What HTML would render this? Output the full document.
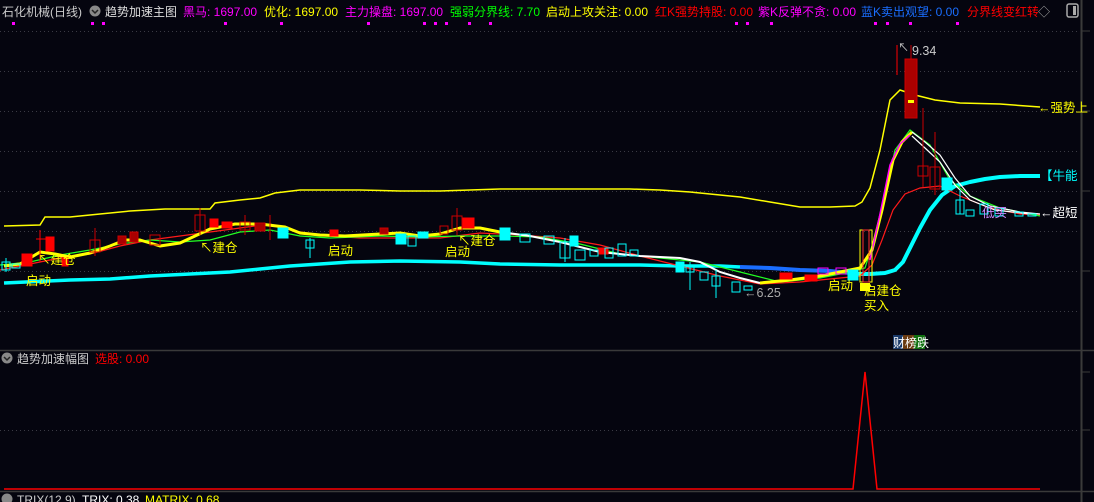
<!DOCTYPE html>
<html><head><meta charset="utf-8"><style>
html,body{margin:0;padding:0;background:#05050f;width:1094px;height:502px;overflow:hidden}
svg{display:block}
text{font-family:"Liberation Sans","Noto Sans CJK SC",sans-serif}
</style></head><body>
<svg width="1094" height="502" viewBox="0 0 1094 502" xmlns="http://www.w3.org/2000/svg">
<defs><clipPath id="hc"><rect x="0" y="0" width="1038" height="30"/></clipPath></defs>
<rect width="1094" height="502" fill="#05050f"/>
<g stroke="#3a3a44" stroke-dasharray="1 3" stroke-width="1">
<line x1="0" y1="31.5" x2="1080" y2="31.5"/><line x1="0" y1="71.5" x2="1080" y2="71.5"/>
<line x1="0" y1="111.5" x2="1080" y2="111.5"/><line x1="0" y1="151.5" x2="1080" y2="151.5"/>
<line x1="0" y1="191.5" x2="1080" y2="191.5"/><line x1="0" y1="231.5" x2="1080" y2="231.5"/>
<line x1="0" y1="271.5" x2="1080" y2="271.5"/><line x1="0" y1="311.5" x2="1080" y2="311.5"/>
<line x1="0" y1="430.5" x2="1080" y2="430.5"/>
</g>
<line x1="1081.5" y1="0" x2="1081.5" y2="502" stroke="#3a3a3a" stroke-width="2"/>
<line x1="0" y1="350.5" x2="1094" y2="350.5" stroke="#3a3a3a" stroke-width="1.5"/>
<line x1="0" y1="491.5" x2="1094" y2="491.5" stroke="#3a3a3a" stroke-width="1.5"/>
<g stroke="#3a3a3a"><line x1="1082" y1="372" x2="1090" y2="372"/><line x1="1082" y1="430" x2="1090" y2="430"/><line x1="1082" y1="31" x2="1090" y2="31"/><line x1="1082" y1="111" x2="1090" y2="111"/><line x1="1082" y1="191" x2="1090" y2="191"/><line x1="1082" y1="271" x2="1090" y2="271"/></g>
<g fill="#ff00ff"><rect x="12" y="22" width="3" height="3"/><rect x="91" y="22" width="3" height="3"/><rect x="102" y="22" width="3" height="3"/><rect x="224" y="22" width="3" height="3"/><rect x="280" y="22" width="3" height="3"/><rect x="367" y="22" width="3" height="3"/><rect x="423" y="22" width="3" height="3"/><rect x="434" y="22" width="3" height="3"/><rect x="445" y="22" width="3" height="3"/><rect x="468" y="22" width="3" height="3"/><rect x="489" y="22" width="3" height="3"/><rect x="735" y="22" width="3" height="3"/><rect x="746" y="22" width="3" height="3"/><rect x="770" y="22" width="3" height="3"/><rect x="874" y="22" width="3" height="3"/><rect x="886" y="22" width="3" height="3"/><rect x="909" y="22" width="3" height="3"/><rect x="956" y="22" width="3" height="3"/></g>
<polyline fill="none" stroke="#ffff00" stroke-width="1.5" points="4,226 40,225 45,217 70,217 100,214 130,211 165,209 210,209 215,203 240,200 260,198 275,193 300,190 360,190 400,191 440,191 470,190 500,189 550,189 630,189 660,190 690,192 720,195 740,197 770,202 800,207 830,207 855,206 862,202 870,188 880,150 890,100 900,90 915,95 935,100 960,103 1000,104 1040,107"/>
<polyline fill="none" stroke="#00ffff" stroke-width="3.5" points="4,283 70,280 110,279 150,276 190,274 230,272 260,269 290,266 320,264 350,262 400,261 460,262 500,264 560,265 640,265 680,266 700,266 720,266 740,267"/>
<polyline fill="none" stroke="#1a6eff" stroke-width="4" points="740,267 770,268 800,270 830,271 850,273"/>
<polyline fill="none" stroke="#00ffff" stroke-width="4" stroke-linejoin="round" points="850,274 870,274 885,273 895,270 903,262 910,248 920,228 930,210 942,195 955,186 970,182 985,179 1000,177 1020,176 1040,176"/>
<polyline fill="none" stroke="#ff1a1a" stroke-width="1.2" points="0,270 30,264 60,258 90,254 120,246 150,240 180,236 210,232 240,228 270,224 300,232 330,236 360,238 400,238 440,238 480,233 520,235 560,238 600,245 640,256 680,266 720,276 760,284 800,282 840,278 860,276 872,265 882,240 893,210 905,194 920,188 940,186 960,196 990,208 1020,214 1040,215"/>
<polyline fill="none" stroke="#22ff22" stroke-width="1.2" points="0,265 30,262 60,255 90,250 120,244 150,240 180,242 210,240 240,232 270,230 300,236 330,238 380,236 420,237 460,236 500,236 540,237 580,244 620,254 660,258 700,262 740,272 780,282 820,278 850,272 865,268 880,220 895,150 910,130 930,145 950,180 970,196 1000,208 1040,216"/>
<polyline fill="none" stroke="#ffff00" stroke-width="3" stroke-linejoin="round" points="4,266 20,264 30,258 40,252 55,254 70,257 90,253 110,246 125,240 140,240 160,246 180,243 195,236 210,229 235,224 260,224 285,227 300,233 320,235 345,236 380,234 400,233 420,236 440,234 460,228 480,228 500,232"/>
<polyline fill="none" stroke="#ffffff" stroke-width="2" points="500,232 530,236 560,242 600,252 640,256 680,258 700,262 720,272 740,278 760,283"/>
<polyline fill="none" stroke="#ffff00" stroke-width="3" points="760,283 790,280 820,276 845,271 860,268 872,250 882,210 893,160 902,142 912,132"/>
<polyline fill="none" stroke="#ff00ff" stroke-width="1.5" points="870,260 880,214 890,165 900,144 910,135"/>
<polyline fill="none" stroke="#ffffff" stroke-width="1.2" points="912,132 925,142 940,155 955,178 970,196 990,206 1020,212 1040,214"/>
<polyline fill="none" stroke="#ffffff" stroke-width="1.2" points="912,136 925,148 940,162 955,185 970,200 995,210 1030,214"/>
<g stroke-width="1">
<g fill="#ff0000" stroke="#ff0000">
<rect x="22" y="254" width="10" height="12"/><rect x="46" y="237" width="8" height="14"/><line x1="40" y1="230" x2="40" y2="262"/><line x1="36" y1="239" x2="46" y2="239"/>
<rect x="62" y="258" width="6" height="8"/><rect x="210" y="219" width="8" height="8"/><rect x="222" y="222" width="10" height="6"/>
<rect x="330" y="230" width="8" height="6"/><rect x="462" y="218" width="12" height="10"/><rect x="598" y="248" width="10" height="6"/>
<rect x="780" y="273" width="12" height="6"/><rect x="805" y="275" width="12" height="6"/>
</g>
<g fill="#aa0000" stroke="#cc0000">
<rect x="905" y="59" width="12" height="59"/><line x1="911" y1="45" x2="911" y2="59"/>
<rect x="118" y="236" width="8" height="8"/><rect x="130" y="232" width="8" height="10"/><rect x="255" y="223" width="10" height="8"/><rect x="380" y="228" width="8" height="6"/>
</g>
<rect x="908" y="100" width="6" height="3" fill="#ffff00"/>
<line x1="897" y1="45" x2="897" y2="75" stroke="#ff0000"/>
<g fill="none" stroke="#cc0000">
<rect x="90" y="240" width="10" height="12"/><line x1="95" y1="228" x2="95" y2="256"/>
<rect x="150" y="235" width="10" height="10"/><rect x="195" y="215" width="10" height="16"/><line x1="200" y1="208" x2="200" y2="235"/>
<rect x="240" y="222" width="10" height="8"/><line x1="245" y1="215" x2="245" y2="235"/><line x1="270" y1="215" x2="270" y2="240"/>
<rect x="452" y="216" width="10" height="14"/><line x1="457" y1="208" x2="457" y2="235"/><rect x="440" y="226" width="8" height="8"/>
<rect x="918" y="166" width="10" height="10"/><line x1="923" y1="108" x2="923" y2="187"/>
<rect x="930" y="167" width="10" height="22"/><line x1="935" y1="132" x2="935" y2="195"/>
</g>
<rect x="860" y="230" width="12" height="52" fill="none" stroke="#ffff00"/>
<rect x="863" y="230" width="6" height="52" fill="none" stroke="#ff3030"/>
<rect x="860" y="283" width="10" height="8" fill="#ffff00"/>
<g fill="#00ffff" stroke="#00ffff">
<rect x="278" y="228" width="10" height="10"/><rect x="396" y="234" width="10" height="10"/><rect x="500" y="228" width="10" height="12"/><rect x="848" y="270" width="10" height="10"/><rect x="942" y="178" width="10" height="12"/>
<rect x="418" y="232" width="10" height="6"/><rect x="570" y="236" width="8" height="10"/><rect x="676" y="262" width="8" height="10"/>
</g>
<g fill="none" stroke="#00ffff">
<rect x="2" y="262" width="8" height="8"/><line x1="6" y1="258" x2="6" y2="272"/><rect x="12" y="264" width="8" height="4"/>
<rect x="306" y="240" width="8" height="8"/><line x1="310" y1="238" x2="310" y2="258"/>
<rect x="408" y="236" width="8" height="10"/><rect x="520" y="234" width="10" height="8"/><rect x="544" y="236" width="10" height="8"/>
<rect x="560" y="242" width="10" height="16"/><line x1="565" y1="238" x2="565" y2="262"/><rect x="575" y="250" width="10" height="10"/>
<rect x="590" y="250" width="8" height="6"/><rect x="605" y="248" width="8" height="10"/><rect x="618" y="244" width="8" height="12"/><rect x="630" y="250" width="8" height="6"/>
<rect x="686" y="266" width="8" height="6"/><line x1="690" y1="262" x2="690" y2="290"/><rect x="700" y="272" width="8" height="8"/><rect x="712" y="276" width="8" height="10"/><line x1="716" y1="270" x2="716" y2="298"/>
<rect x="732" y="282" width="8" height="10"/><rect x="744" y="286" width="8" height="4"/>
<rect x="818" y="268" width="10" height="6" stroke="#ff00ff"/><rect x="836" y="268" width="10" height="6" stroke="#ff00ff"/>
<rect x="956" y="200" width="8" height="14"/><line x1="960" y1="190" x2="960" y2="214"/><rect x="966" y="210" width="8" height="6"/>
<rect x="980" y="204" width="8" height="10"/><rect x="995" y="208" width="8" height="8"/><rect x="1015" y="212" width="8" height="4"/><rect x="1028" y="214" width="8" height="2"/>
</g>
</g>
<g font-size="12.5">
<text x="26" y="285" fill="#ffff00">启动</text>
<text x="38" y="264" fill="#ffff00">↖建仓</text>
<text x="200" y="252" fill="#ffff00">↖建仓</text>
<text x="328" y="255" fill="#ffff00">启动</text>
<text x="445" y="256" fill="#ffff00">启动</text>
<text x="458" y="245" fill="#ffff00">↖建仓</text>
<text x="828" y="290" fill="#ffff00">启动</text>
<text x="864" y="295" fill="#ffff00">启建仓</text>
<text x="864" y="310" fill="#ffff00">买入</text>
<text x="744" y="297" fill="#aaaaaa">←6.25</text>
<text x="912" y="55" fill="#cccccc">9.34</text>
<text x="898" y="51" fill="#cccccc" font-size="11">↖</text>
<text x="1038" y="112" fill="#ffff00">←强势上</text>
<text x="1040" y="180" fill="#00ffff">【牛能</text>
<text x="1040" y="217" fill="#ffffff">←超短</text>
<text x="982" y="217" fill="#cc88ff">低买</text>
</g>
<rect x="893" y="335" width="10" height="14" fill="#1a3a6a"/><rect x="903" y="335" width="11" height="14" fill="#6a3a10"/><rect x="914" y="335" width="11" height="14" fill="#107010"/>
<text x="893" y="347" fill="#ffffff" font-size="12">财榜跌</text>
<g font-size="12" clip-path="url(#hc)">
<text x="2" y="16" fill="#cccccc">石化机械(日线)</text>
<text x="105" y="16" fill="#dddddd">趋势加速主图</text>
<text x="183" y="16" fill="#ff00ff">黑马: 1697.00</text>
<text x="264" y="16" fill="#ffff00">优化: 1697.00</text>
<text x="345" y="16" fill="#ff00ff">主力操盘: 1697.00</text>
<text x="450" y="16" fill="#00ff00">强弱分界线: 7.70</text>
<text x="546" y="16" fill="#ffff00">启动上攻关注: 0.00</text>
<text x="655" y="16" fill="#ff0000">红K强势持股: 0.00</text>
<text x="758" y="16" fill="#ff00ff">紫K反弹不贪: 0.00</text>
<text x="861" y="16" fill="#1a6eff">蓝K卖出观望: 0.00</text>
<text x="967" y="16" fill="#ff0000">分界线变红转强</text>
</g>
<circle cx="95" cy="11" r="5.5" fill="#888"/><path d="M92 10 L95 13 L98 10" stroke="#222" stroke-width="1.5" fill="none"/>
<text x="1038" y="16" fill="#aaaaaa" font-size="12">◇</text>
<rect x="1067" y="4" width="11" height="13" rx="2" fill="none" stroke="#aaa" stroke-width="1.5"/><rect x="1073" y="6" width="3" height="9" fill="#aaa"/>
<circle cx="7" cy="358" r="5.5" fill="#888"/><path d="M4 357 L7 360 L10 357" stroke="#222" stroke-width="1.5" fill="none"/>
<text x="17" y="363" fill="#cccccc" font-size="12">趋势加速幅图</text>
<text x="95" y="363" fill="#ff0000" font-size="12">选股: 0.00</text>
<polyline fill="none" stroke="#ff0000" stroke-width="1.5" points="4,489 853,489 865,372 877,489 1040,489"/>
<circle cx="7" cy="499" r="5.5" fill="#888"/>
<text x="17" y="504" fill="#cccccc" font-size="12">TRIX(12,9)</text>
<text x="82" y="504" fill="#ffffff" font-size="12">TRIX: 0.38</text>
<text x="145" y="504" fill="#ffff00" font-size="12">MATRIX: 0.68</text>
</svg>
</body></html>
